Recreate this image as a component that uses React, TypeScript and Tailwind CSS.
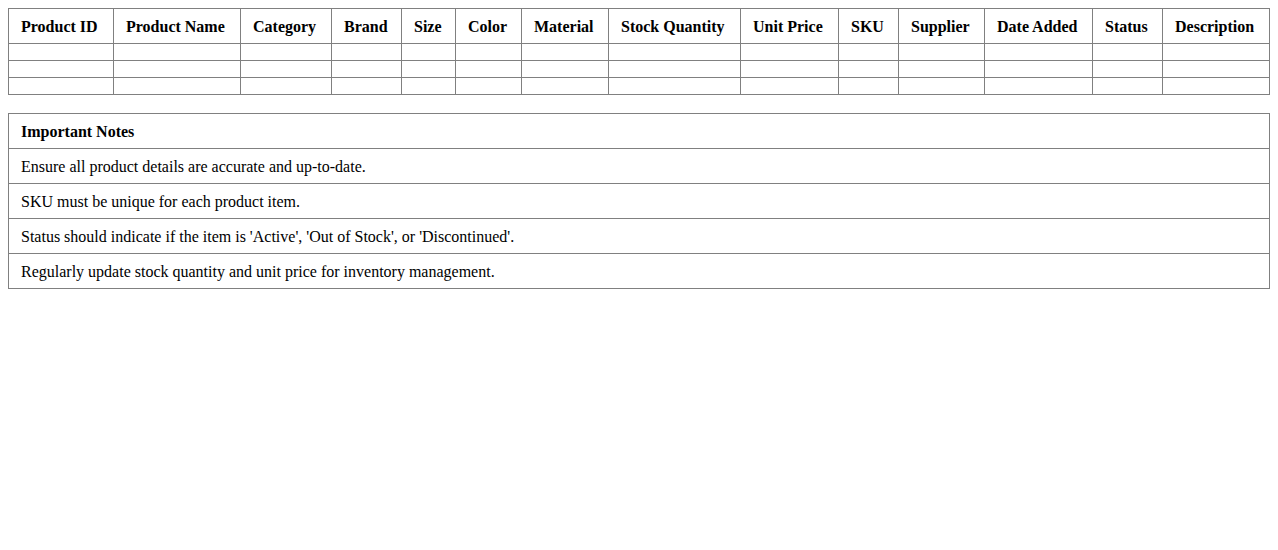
import React from "react";

const headers: [string, number][] = [
  ["Product ID", 105],
  ["Product Name", 127],
  ["Category", 91],
  ["Brand", 70],
  ["Size", 54],
  ["Color", 66],
  ["Material", 87],
  ["Stock Quantity", 132],
  ["Unit Price", 98],
  ["SKU", 60],
  ["Supplier", 86],
  ["Date Added", 108],
  ["Status", 70],
  ["Description", 107],
];

const notes = [
  "Ensure all product details are accurate and up-to-date.",
  "SKU must be unique for each product item.",
  "Status should indicate if the item is 'Active', 'Out of Stock', or 'Discontinued'.",
  "Regularly update stock quantity and unit price for inventory management.",
];

export default function App() {
  return (
    <div className="p-2 bg-white text-black text-[16px] leading-[18px]" style={{ fontFamily: '"Liberation Serif", "Times New Roman", serif' }}>
      <table className="w-full table-fixed border-collapse border border-[#808080]">
        <colgroup>
          {headers.map(([h, w]) => (
            <col key={h} style={{ width: w }} />
          ))}
        </colgroup>
        <thead>
          <tr>
            {headers.map(([h]) => (
              <th key={h} className="border border-[#808080] px-3 pt-[9px] pb-[7px] text-left font-bold whitespace-nowrap">
                {h}
              </th>
            ))}
          </tr>
        </thead>
        <tbody>
          {[0, 1, 2].map((r) => (
            <tr key={r}>
              {headers.map(([h]) => (
                <td key={h} className="border border-[#808080] px-3 py-2 h-[17px]"></td>
              ))}
            </tr>
          ))}
        </tbody>
      </table>

      <table className="w-full mt-[18px] border-collapse border border-[#808080]">
        <thead>
          <tr>
            <th className="border border-[#808080] px-3 pt-[9px] pb-[7px] text-left font-bold">Important Notes</th>
          </tr>
        </thead>
        <tbody>
          {notes.map((n) => (
            <tr key={n}>
              <td className="border border-[#808080] px-3 pt-[9px] pb-[7px]">{n}</td>
            </tr>
          ))}
        </tbody>
      </table>
    </div>
  );
}
